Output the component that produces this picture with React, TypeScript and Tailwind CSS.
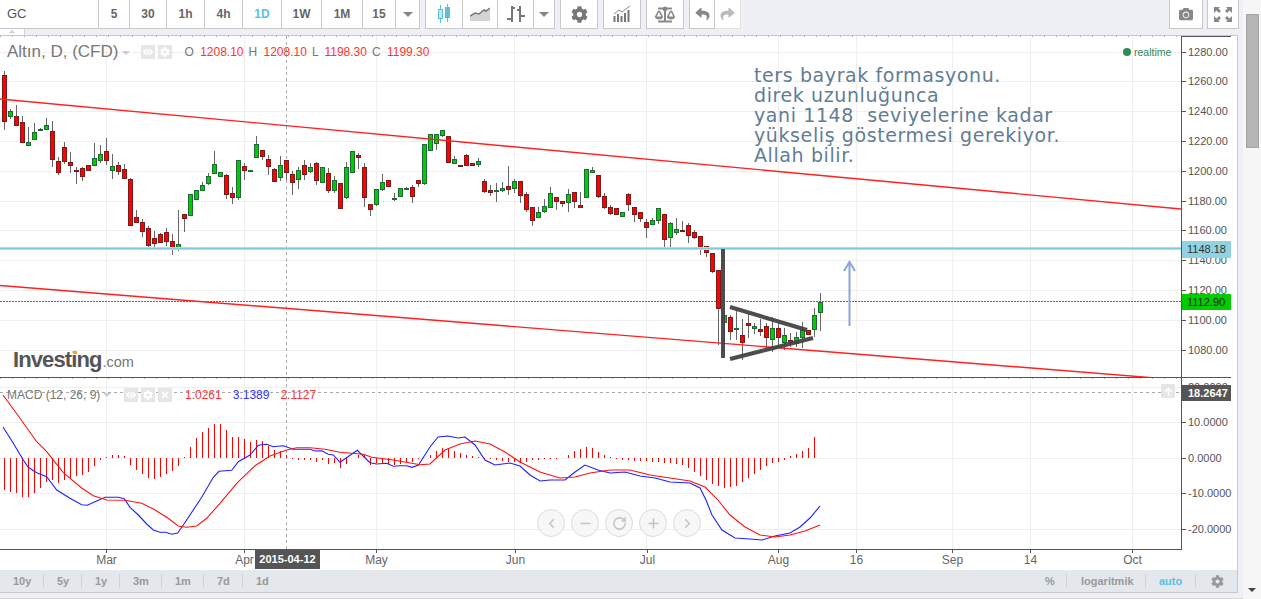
import React from "react";
import { FaCog, FaCamera, FaBalanceScale, FaReply, FaShare, FaEye, FaArrowUp, FaTimes } from "react-icons/fa";
import { ChevronLeft, ChevronRight, Minus, Plus, RotateCw } from "lucide-react";

type C = [number, number, number, number, "r" | "g"];
const candles: C[] = [
[71,130,75,122,"r"],[109,119,111,117,"g"],[105,126,116,126,"r"],[116,143,122,143,"r"],[127,146,142,146,"g"],[123,140,132,140,"g"],[128,131,129,131,"g"],[118,130,125,130,"g"],[121,167,131,160,"r"],[157,175,161,173,"r"],
[142,164,147,162,"r"],[152,173,162,166,"r"],[167,184,170,171,"r"],[167,181,168,177,"r"],[165,171,165,171,"r"],[143,166,158,166,"g"],[145,163,154,161,"g"],[138,165,151,161,"r"],[154,179,166,171,"g"],[162,175,165,172,"r"],
[164,179,169,179,"r"],[178,226,179,226,"r"],[210,223,217,223,"r"],[219,237,222,232,"r"],[226,250,228,246,"r"],[231,247,238,244,"r"],[233,243,234,243,"r"],[228,246,232,242,"r"],[234,255,241,250,"r"],[210,251,244,249,"g"],
[214,232,214,219,"r"],[194,216,194,216,"g"],[190,200,190,200,"g"],[182,191,185,191,"g"],[173,185,176,184,"g"],[151,174,164,174,"g"],[172,177,172,177,"g"],[174,199,175,195,"r"],[187,204,193,198,"r"],[160,200,160,198,"g"],
[163,180,166,171,"r"],[170,171,170,171,"g"],[136,158,144,158,"g"],[150,160,150,157,"r"],[155,175,159,167,"r"],[168,182,169,182,"r"],[156,181,165,178,"g"],[160,180,160,173,"r"],[171,195,174,183,"r"],[167,189,170,180,"g"],
[160,180,165,175,"r"],[163,173,167,172,"g"],[162,185,163,181,"r"],[167,183,167,183,"g"],[168,193,173,191,"r"],[176,193,180,191,"g"],[183,209,183,209,"r"],[162,199,167,198,"g"],[151,173,151,173,"g"],[153,169,155,158,"r"],
[163,207,167,198,"r"],[204,216,204,210,"r"],[189,206,189,205,"g"],[174,191,182,190,"g"],[180,187,180,187,"r"],[193,201,198,200,"g"],[188,197,188,197,"g"],[187,190,188,189,"g"],[185,203,187,197,"r"],[180,187,180,184,"r"],
[144,185,144,184,"g"],[134,151,134,151,"g"],[134,150,134,144,"g"],[130,137,130,136,"g"],[136,163,136,163,"r"],[156,164,159,164,"g"],[165,166,165,166,"r"],[154,166,155,166,"r"],[163,166,163,166,"r"],[158,167,161,165,"g"],
[179,193,181,192,"r"],[185,196,190,193,"r"],[183,202,190,192,"g"],[182,192,188,191,"g"],[166,195,186,190,"r"],[179,193,181,189,"g"],[181,203,181,196,"r"],[192,212,194,210,"r"],[207,226,207,221,"r"],[207,218,212,218,"g"],
[199,213,206,212,"g"],[187,208,193,208,"g"],[197,210,197,202,"r"],[201,207,201,204,"r"],[189,212,194,203,"g"],[192,208,192,202,"r"],[192,208,205,208,"r"],[169,198,169,198,"g"],[167,173,170,173,"g"],[175,198,175,197,"r"],
[193,209,196,208,"r"],[205,215,207,214,"r"],[208,215,208,215,"r"],[212,217,212,217,"g"],[193,211,194,205,"r"],[207,222,207,215,"r"],[212,222,212,219,"r"],[219,238,222,228,"r"],[218,225,220,225,"g"],[208,224,208,221,"g"],
[214,248,214,240,"r"],[222,249,223,238,"g"],[218,235,229,233,"g"],[221,232,230,232,"r"],[223,243,225,236,"r"],[230,239,232,238,"r"],[236,255,236,248,"r"],[246,257,246,253,"r"],[253,273,253,272,"r"],[270,345,270,309,"r"],
[312,345,315,323,"g"],[315,340,317,332,"r"],[311,340,328,329,"g"],[319,360,335,343,"r"],[313,338,323,326,"r"],[323,334,326,329,"g"],[319,336,329,332,"r"],[323,348,326,338,"r"],[317,352,328,340,"g"],[323,348,328,338,"r"],
[328,350,335,343,"g"],[333,347,340,343,"r"],[332,347,337,344,"g"],[322,348,330,338,"g"],[330,335,330,335,"r"],[308,337,315,330,"g"],[293,331,302,313,"g"],
];

const histZ = [270,276,279,291,291,279,264,246,240,249,240,234,228,225,216,198,180,171,165,165,168,195,210,222,234,237,231,222,213,198,171,141,114,96,84,72,72,90,111,111,117,126,120,123,138,150,153,165,177,180,180,180,186,180,192,189,204,192,174,165,165,195,189,189,192,195,192,186,186,177];
const histY = [458,455,451,448,449,451,453,455,456,457,459,459,460,461,462,462,463,462,460,460,459,459,459,458,455,451,449,447,448,452,455,457,459,460,460,461,461,461,462,462,463,463,464,465,468,472,476,480,484,486,488,487,486,482,478,474,470,466,463,462,460,456,454,451,448,437];
const hist = [...histZ.map((z) => 400 + z / 3), ...histY];

const zp = (a: number[][]) => a.map(([x, y]) => `${(x / 3).toFixed(1)},${(400 + y / 3).toFixed(1)}`).join(" ");
const blue =
  "3,427 " +
  zp([[40,130],[70,180],[85,202],[110,218],[140,230],[170,270],[210,295],[245,314],[262,316],[290,303],[315,292],[355,292],[373,296],[390,322],[415,345],[440,372],[460,390],[480,397],[497,397],[515,403],[533,399],[550,375],[605,292],[640,232],[657,214],[695,211],[715,185],[750,165],[775,136],[800,133],[820,140],[850,137],[880,148],[930,148],[945,153],[965,152],[985,163],[1000,165],[1020,187],[1072,151],[1110,188],[1130,192],[1160,190],[1180,199],[1200,197],[1220,197],[1235,202],[1255,196]]) +
  " 430,447 438,437 448,436 458,438 465,437 475,445 485,460 495,465 510,463 520,466 530,475 540,481 550,480 565,480 575,472 585,465 598,470 610,473 625,472 640,476 655,478 670,482 690,483 700,488 706,500 712,515 722,530 735,538 750,539 762,540 775,536 790,533 800,527 810,518 820,506";
const red =
  "3,395 " +
  zp([[20,0],[60,55],[110,125],[140,155],[190,218],[245,264],[280,287],[320,300],[375,301],[425,310],[460,327],[500,352],[535,378],[560,382],[590,378],[620,355],[660,310],[710,250],[765,197],[810,168],[860,150],[890,143],[930,143],[975,148],[1020,157],[1090,163],[1115,172],[1180,180],[1260,194]]) +
  " 430,464 445,450 460,444 475,441 490,444 505,452 520,462 540,472 560,478 575,477 590,473 610,470 630,470 650,475 670,478 690,481 705,487 718,500 730,515 745,527 760,535 775,537 790,535 805,531 820,525";

const vGrid = [106.5, 244.5, 376.5, 514.5, 646.5, 778.5, 856.5, 952.5, 1030.5, 1132.5];
const pGrid: [number, string][] = [[52,"1280.00"],[81,"1260.00"],[111,"1240.00"],[141,"1220.00"],[171,"1200.00"],[201,"1180.00"],[230,"1160.00"],[260,"1140.00"],[290,"1120.00"],[320,"1100.00"],[350,"1080.00"]];
const mGrid: [number, string][] = [[387,"20.0000"],[422,"10.0000"],[458,"0.0000"],[493,"-10.0000"],[529,"-20.0000"]];
const xLabels: [number, string][] = [[106,"Mar"],[244,"Apr"],[376,"May"],[515,"Jun"],[647,"Jul"],[778,"Aug"],[856,"16"],[952,"Sep"],[1030,"14"],[1132,"Oct"]];

function Candles() {
  return (
    <g shapeRendering="crispEdges">
      {candles.map(([wt, wb, bt, bb, k], i) => {
        const x = 4.5 + 6 * i;
        return (
          <g key={i}>
            <line x1={x} x2={x} y1={wt} y2={wb} stroke="#666666" />
            <rect x={x - 2} y={bt + 0.5} width={4} height={Math.max(bb - bt - 1, 1)} fill={k === "r" ? "#ff0000" : "#00cc00"} stroke={k === "r" ? "#7a1a1a" : "#1d6a35"} />
          </g>
        );
      })}
    </g>
  );
}

const btnBase = "flex items-center justify-center border-r border-b border-[#c8c8c8] bg-white h-[29px] shrink-0";

function Caret() {
  return <span className="w-0 h-0 border-l-[5px] border-r-[5px] border-t-[5px] border-l-transparent border-r-transparent border-t-[#888888]" />;
}

export default function App() {
  return (
    <div className="flex w-[1261px] h-[599px] overflow-hidden bg-[#eff0f5] font-['Liberation_Sans',Arial,sans-serif]">
      <div className="w-[1243px] shrink-0 flex flex-col">
        {/* toolbar */}
        <div className="flex h-[29px] pr-[4px] text-[12px] font-bold text-[#666666]">
          <div className={`${btnBase} w-[99px] justify-start pl-[7px] text-[13px] font-normal text-[#555555]`}>GC</div>
          <div className={`${btnBase} w-[31px]`}>5</div>
          <div className={`${btnBase} w-[37px]`}>30</div>
          <div className={`${btnBase} w-[38px]`}>1h</div>
          <div className={`${btnBase} w-[38px]`}>4h</div>
          <div className={`${btnBase} w-[39px] bg-[#f0f3f6] text-[#5bc0de]`}>1D</div>
          <div className={`${btnBase} w-[40px]`}>1W</div>
          <div className={`${btnBase} w-[41px]`}>1M</div>
          <div className={`${btnBase} w-[33px]`}>15</div>
          <div className={`${btnBase} w-[24px]`}><Caret /></div>

          <div className={`${btnBase} ml-[5px] w-[38px] border-l bg-[#f0f3f6]`}>
            <svg width="18" height="20" viewBox="0 0 18 20" shapeRendering="crispEdges">
              <path d="M5.5 1v18M12.5 0v18" stroke="#5bc0de" />
              <rect x="3.5" y="5.5" width="4" height="9" fill="#c5e6f0" stroke="#5bc0de" />
              <rect x="10.5" y="3.5" width="4" height="10" fill="#5bc0de" stroke="#5bc0de" />
            </svg>
          </div>
          <div className={`${btnBase} w-[35px]`}>
            <svg width="20" height="14" viewBox="0 0 20 14">
              <path d="M0 9 L5 6 L9 7 L14 3 L16 4 L20 1 V14 H0 Z" fill="#d4d4d4" />
              <path d="M0 9 L5 6 L9 7 L14 3 L16 4 L20 1" fill="none" stroke="#777777" strokeWidth="1.5" />
            </svg>
          </div>
          <div className={`${btnBase} w-[36px]`}>
            <svg width="18" height="18" viewBox="0 0 18 18" shapeRendering="crispEdges">
              <path d="M5 1v16M0 14h5M5 3h3M13 1v16M10 5h3M13 11h5" stroke="#777777" strokeWidth="2" fill="none" />
            </svg>
          </div>
          <div className={`${btnBase} w-[21px]`}><Caret /></div>

          <div className={`${btnBase} ml-[5px] w-[38px] border-l`}><FaCog className="w-[17px] h-[17px] text-[#777777]" /></div>
          <div className={`${btnBase} ml-[5px] w-[38px] border-l`}>
            <svg width="18" height="16" viewBox="0 0 18 16">
              <path d="M1 8 L6 4 L9 6 L13 3 L17 0" fill="none" stroke="#888888" />
              <path d="M1.5 10v6M5 8v8M8.5 10v6M12 7v9M15.5 4v12" stroke="#777777" strokeWidth="2" />
            </svg>
          </div>
          <div className={`${btnBase} ml-[5px] w-[38px] border-l`}><FaBalanceScale className="w-[20px] h-[17px] text-[#888888]" /></div>
          <div className={`${btnBase} ml-[5px] w-[26px] border-l`}><FaReply className="w-[15px] h-[14px] text-[#888888]" /></div>
          <div className={`${btnBase} w-[26px] border-[#e2e2e2]`}><FaShare className="w-[15px] h-[14px] text-[#bbbbbb]" /></div>

          <div className="flex-1" />
          <div className={`${btnBase} w-[34px] border-l`}><FaCamera className="w-[16px] h-[14px] text-[#888888]" /></div>
          <div className={`${btnBase} ml-[4px] w-[32px] border-l`}>
            <svg width="18" height="15" viewBox="0 0 18 15" fill="#888888">
              <path d="M0 0h6L4.5 1.5 7 4 5 6 2.5 3.5 0 6zM18 0h-6l1.500 1.500L11 4l2 2 2.500-2.500L18 6zM0 15h6l-1.500-1.500L7 11 5 9l-2.500 2.500L0 9zM18 15h-6l1.500-1.500L11 11l2-2 2.500 2.500L18 9z" />
            </svg>
          </div>
        </div>

        {/* strip */}
        <div className="h-[6px] relative">
          <div className="w-[25px] h-[6px] bg-white border-r border-[#d5d5d5] flex justify-center pt-[1px]">
            <span className="w-0 h-0 border-l-[3px] border-r-[3px] border-b-[3px] border-l-transparent border-r-transparent border-b-[#cccccc]" />
          </div>
        </div>

        {/* chart frame */}
        <div className="w-[1238px] bg-white border-t border-r border-[#c8c8c8] flex flex-col">
          {/* price pane */}
          <div className="relative flex h-[341px]">
            <svg width="1181" height="341" viewBox="0 36 1181 341" className="shrink-0 block">
              {pGrid.map(([y]) => <line key={y} x1="0" x2="1181" y1={y + 0.5} y2={y + 0.5} stroke="#efefef" />)}
              {vGrid.map((x) => <line key={x} x1={x} x2={x} y1="36" y2="377" stroke="#efefef" />)}
              <line x1="0" x2="1181" y1="36.500" y2="36.500" stroke="#aaaaaa" strokeDasharray="1 11" />
              <line x1="286.500" x2="286.500" y1="36" y2="377" stroke="#aaaaaa" strokeDasharray="3 3" />
              <line x1="0" x2="1181" y1="301.500" y2="301.500" stroke="#00b400" strokeDasharray="2 1" />
              <Candles />
              <line x1="0" y1="99" x2="1181" y2="209" stroke="#ff2020" strokeWidth="1.400" />
              <line x1="0" y1="285.500" x2="1181" y2="380" stroke="#ff2020" strokeWidth="1.400" />
              <line x1="0" x2="1181" y1="248.500" y2="248.500" stroke="#a8dfe9" strokeWidth="3" />
              <line x1="0" x2="1181" y1="248.500" y2="248.500" stroke="#7ccbdc" strokeWidth="1" />
              <g stroke="#444444" strokeWidth="4" opacity="0.95">
                <line x1="723" y1="249" x2="723" y2="358" />
                <line x1="730" y1="307" x2="807" y2="330" />
                <line x1="730" y1="359" x2="813" y2="338" />
              </g>
              <g stroke="#8fa3d6" strokeWidth="2" fill="none">
                <path d="M849.500 326V262" />
                <path d="M844 271L849.500 262L855 271" />
              </g>
            </svg>
            <svg width="56" height="341" viewBox="1181 36 56 341" className="shrink-0 block text-[11px]">
              <line x1="1181.500" x2="1181.500" y1="36" y2="377" stroke="#555555" />
              <line x1="1181" x2="1231" y1="36.500" y2="36.500" stroke="#555555" />
              {pGrid.map(([y, t]) => (
                <g key={t}>
                  <line x1="1182" x2="1186" y1={y + 0.5} y2={y + 0.5} stroke="#555555" />
                  <text x="1188" y={y + 4} fill="#555555">{t}</text>
                </g>
              ))}
            </svg>

            {/* legend */}
            <div className="absolute left-[7px] top-[7px] flex items-center h-[18px] text-[#777777]">
              <span className="text-[17px] leading-[18px]">Altın, D, (CFD)</span>
              <span className="ml-[4px] mt-[2px] w-0 h-0 border-l-[4px] border-r-[4px] border-t-[4px] border-l-transparent border-r-transparent border-t-[#cccccc]" />
              <span className="ml-[11px] w-[14px] h-[14px] bg-[#e6e6e6] flex items-center justify-center"><FaEye className="w-[10px] h-[10px] text-white" /></span>
              <span className="ml-[3px] w-[14px] h-[14px] bg-[#e6e6e6] flex items-center justify-center"><FaCog className="w-[10px] h-[10px] text-white" /></span>
              <span className="ml-[12px] flex gap-[5px] text-[12px]">
                <span>O <span className="ml-[3px] text-[#ff3333]">1208.10</span></span>
                <span>H <span className="ml-[3px] text-[#ff3333]">1208.10</span></span>
                <span>L <span className="ml-[3px] text-[#ff3333]">1198.30</span></span>
                <span>C <span className="ml-[3px] text-[#ff3333]">1199.30</span></span>
              </span>
            </div>
            <div className="absolute left-[1123px] top-[9px] flex items-center gap-[3px] text-[10.5px] leading-[14px] text-[#2e8b57]">
              <span className="w-[8px] h-[8px] rounded-full bg-[#2e8b57]" />
              <span>realtime</span>
            </div>
            <div className="absolute left-[754px] top-[29px] text-[19px] tracking-[0.6px] leading-[20px] text-[#5f7d95] font-['DejaVu_Sans',Verdana,sans-serif] whitespace-pre">
              <div>ters bayrak formasyonu.</div>
              <div>direk uzunluğunca</div>
              <div>yani 1148  seviyelerine kadar</div>
              <div>yükseliş göstermesi gerekiyor.</div>
              <div>Allah bilir.</div>
            </div>
            <div className="absolute left-[13px] top-[312px] flex items-baseline text-[#555555] leading-[24px]">
              <span className="text-[22px] font-bold tracking-[-0.9px]">Investing</span>
              <span className="ml-[1px] text-[14.5px] text-[#777777]">.com</span>
            </div>
            <span className="absolute left-[73px] top-[315px] w-[4px] h-[3px] bg-[#f5a623]" />
            {/* price tags */}
            <div className="absolute left-[1182px] top-[205px] w-[49px] h-[17px] bg-[#8fd3e3] text-[#333333] text-[11px] leading-[17px] pl-[5px]">1148.18</div>
            <div className="absolute left-[1182px] top-[258px] w-[49px] h-[16px] bg-[#00cc00] text-[#222222] text-[11px] leading-[16px] pl-[5px]">1112.90</div>
          </div>

          {/* pane divider */}
          <div className="w-[1231px] h-[1px] bg-[#555555]" />

          {/* MACD pane */}
          <div className="relative flex h-[171px]">
            <svg width="1181" height="171" viewBox="0 378 1181 171" className="shrink-0 block">
              {mGrid.map(([y]) => <line key={y} x1="0" x2="1181" y1={y + 0.5} y2={y + 0.5} stroke="#efefef" />)}
              {vGrid.map((x) => <line key={x} x1={x} x2={x} y1="378" y2="549" stroke="#efefef" />)}
              <line x1="0" x2="1181" y1="378.500" y2="378.500" stroke="#aaaaaa" strokeDasharray="1 11" />
              <line x1="286.500" x2="286.500" y1="378" y2="549" stroke="#aaaaaa" strokeDasharray="3 3" />
              <line x1="0" x2="1181" y1="392.500" y2="392.500" stroke="#aaaaaa" strokeDasharray="3 3" />
              <g shapeRendering="crispEdges">
                {hist.map((y, i) => {
                  const x = 4.5 + 6 * i;
                  return <line key={i} x1={x} x2={x} y1="458" y2={y} stroke="#ff0000" />;
                })}
              </g>
              <polyline points={blue} fill="none" stroke="#2020ff" strokeWidth="1.100" />
              <polyline points={red} fill="none" stroke="#ff1010" strokeWidth="1.100" />
            </svg>
            <svg width="56" height="171" viewBox="1181 378 56 171" className="shrink-0 block text-[11px]">
              <line x1="1181.500" x2="1181.500" y1="378" y2="549" stroke="#555555" />
              {mGrid.map(([y, t]) => (
                <g key={t}>
                  <line x1="1182" x2="1186" y1={y + 0.5} y2={y + 0.5} stroke="#555555" />
                  <text x="1188" y={y + 3.5} fill="#555555">{t}</text>
                </g>
              ))}
            </svg>

            <div className="absolute left-[7px] top-[10px] flex items-center h-[14px] text-[12px] text-[#777777]">
              <span>MACD (12, 26, 9)</span>
              <span className="ml-[3px] w-0 h-0 border-l-[4px] border-r-[4px] border-t-[4px] border-l-transparent border-r-transparent border-t-[#cccccc]" />
            </div>
            <div className="absolute left-[124px] top-[10px] flex gap-[3px]">
              <span className="w-[14px] h-[14px] bg-[#e6e6e6] flex items-center justify-center"><FaEye className="w-[10px] h-[10px] text-white" /></span>
              <span className="w-[14px] h-[14px] bg-[#e6e6e6] flex items-center justify-center"><FaCog className="w-[10px] h-[10px] text-white" /></span>
              <span className="w-[14px] h-[14px] bg-[#e6e6e6] flex items-center justify-center"><FaTimes className="w-[10px] h-[10px] text-white" /></span>
            </div>
            <div className="absolute left-[185px] top-[10px] flex gap-[11px] text-[12px] leading-[14px]">
              <span className="text-[#ff3333]">1.0261</span>
              <span className="text-[#3333ff]">3.1389</span>
              <span className="text-[#ff3333]">2.1127</span>
            </div>
            <span className="absolute left-[1161px] top-[6px] w-[14px] h-[14px] bg-[#e6e6e6] flex items-center justify-center"><FaArrowUp className="w-[9px] h-[9px] text-white" /></span>
            <div className="absolute left-[1182px] top-[7px] w-[49px] h-[16px] bg-[#555555] text-white text-[11px] font-bold leading-[16px] pl-[6px]">18.2647</div>

            {/* zoom controls */}
            <div className="absolute left-[537px] top-[131px] flex gap-[6px] text-[#c4c4c4]">
              {[ChevronLeft, Minus, RotateCw, Plus, ChevronRight].map((Icon, i) => (
                <span key={i} className="w-[28px] h-[28px] rounded-full bg-[#f5f5f5]/80 border border-[#dcdcdc] flex items-center justify-center">
                  <Icon size={15} strokeWidth={2.5} />
                </span>
              ))}
            </div>
          </div>

          {/* time axis */}
          <div className="relative h-[21px] bg-white">
            <div className="w-[1182px] h-[1px] bg-[#555555]" />
            {xLabels.map(([x, t]) => (
              <React.Fragment key={t}>
                <span className="absolute top-[1px] w-[1px] h-[3px] bg-[#555555]" style={{ left: x }} />
                <span className="absolute top-[4px] -translate-x-1/2 text-[12px] leading-[14px] text-[#666666]" style={{ left: x + 0.5 }}>{t}</span>
              </React.Fragment>
            ))}
            <div className="absolute left-[255px] top-[1px] w-[65px] h-[19px] bg-[#555555] text-white text-[11px] font-bold leading-[19px] text-center">2015-04-12</div>
          </div>

          {/* bottom bar */}
          <div className="h-[22px] bg-[#e4e7ec] flex items-center text-[11px] font-bold text-[#999999]">
            <div className="w-[44px] pl-[13px] border-r border-[#cfd2d8] h-[14px] leading-[14px] shrink-0">10y</div>
            <div className="w-[38px] pl-[13px] border-r border-[#cfd2d8] h-[14px] leading-[14px] shrink-0">5y</div>
            <div className="w-[38px] pl-[13px] border-r border-[#cfd2d8] h-[14px] leading-[14px] shrink-0">1y</div>
            <div className="w-[42px] pl-[13px] border-r border-[#cfd2d8] h-[14px] leading-[14px] shrink-0">3m</div>
            <div className="w-[42px] pl-[13px] border-r border-[#cfd2d8] h-[14px] leading-[14px] shrink-0">1m</div>
            <div className="w-[39px] pl-[13px] border-r border-[#cfd2d8] h-[14px] leading-[14px] shrink-0">7d</div>
            <div className="w-[38px] pl-[13px] h-[14px] leading-[14px] shrink-0">1d</div>
            <div className="flex-1" />
            <div className="w-[24px] pl-[2px] h-[14px] leading-[14px] border-r border-[#cfd2d8] shrink-0">%</div>
            <div className="w-[79px] pl-[14px] h-[14px] leading-[14px] border-r border-[#cfd2d8] shrink-0">logaritmik</div>
            <div className="w-[50px] pl-[13px] h-[14px] leading-[14px] border-r border-[#cfd2d8] text-[#5bc0de] shrink-0">auto</div>
            <div className="w-[41px] flex justify-center pl-[2px] shrink-0"><FaCog className="w-[13px] h-[13px] text-[#999999]" /></div>
          </div>
        </div>
        <div className="w-[1238px] h-[1px] bg-[#c8c8c8]" />
        <div className="flex-1 border-b border-[#d5d5d5]" />
      </div>

      {/* scrollbar */}
      <div className="flex-1 bg-[#f6f6f6] flex flex-col items-center pt-[14px] relative">
        <div className="w-[13px] h-[134px] bg-[#b5b5b5] border border-[#a5a5a5] ml-[1px]" />
        <span className="absolute bottom-[7px] w-0 h-0 border-l-[4px] border-r-[4px] border-t-[4px] border-l-transparent border-r-transparent border-t-[#444444]" />
      </div>
    </div>
  );
}
